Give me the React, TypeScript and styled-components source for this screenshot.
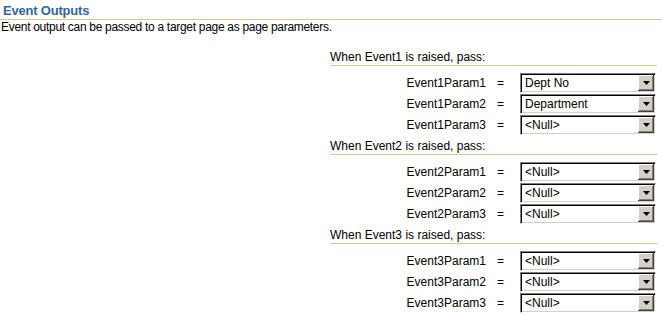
import React from 'react';
import styled, { createGlobalStyle } from 'styled-components';

const GlobalStyle = createGlobalStyle`
    body {
        margin: 0;
        background: #ffffff;
        font-family: "Liberation Sans", Arial, sans-serif;
        font-size: 12px;
        color: #000000;
    }
`;

const Page = styled.div`
    width: 662px;
`;

const Title = styled.div`
    padding: 3px 0 0 3px;
    font-size: 13px;
    font-weight: bold;
    line-height: 16px;
    letter-spacing: -0.2px;
    color: #336699;
    border-bottom: 1px solid #cccc99;
`;

const Description = styled.div`
    padding-left: 1px;
    line-height: 15px;
    letter-spacing: -0.3px;
`;

const Sections = styled.div`
    padding: 11px 5px 0 330px;
`;

const Section = styled.div`
    margin-top: 4px;
`;

const SectionTitle = styled.div`
    line-height: 15px;
    border-bottom: 1px solid #cccc99;
`;

const Rows = styled.div`
    display: flex;
    flex-direction: column;
    gap: 1px;
    margin-top: 7px;
`;

const Row = styled.div`
    display: flex;
    align-items: center;
    justify-content: flex-end;
    height: 20px;
    padding-right: 1px;
`;

const Label = styled.span`
    text-align: right;
`;

const Equals = styled.span`
    margin: 0 16px 0 11px;
`;

const SelectBox = styled.div`
    box-sizing: border-box;
    width: 136px;
    height: 20px;
    display: flex;
    align-items: center;
    background: #ffffff;
    border: 1px solid;
    border-color: #808080 #ffffff #ffffff #808080;
    box-shadow: inset 1px 1px 0 #000000, inset -1px -1px 0 #d4d0c8;
    padding: 1px;
`;

const SelectValue = styled.span`
    flex: 1;
    padding-left: 3px;
    white-space: nowrap;
    overflow: hidden;
`;

const DropButton = styled.span`
    box-sizing: border-box;
    width: 16px;
    height: 16px;
    display: flex;
    align-items: center;
    justify-content: center;
    background: #d4d0c8;
    box-shadow: inset -1px -1px 0 #404040, inset 1px 1px 0 #ffffff,
        inset -2px -2px 0 #808080;
`;

type Param = { name: string; value: string };

type EventDef = { event: string; params: Param[] };

const events: EventDef[] = [
    {
        event: 'Event1',
        params: [
            { name: 'Event1Param1', value: 'Dept No' },
            { name: 'Event1Param2', value: 'Department' },
            { name: 'Event1Param3', value: '<Null>' },
        ],
    },
    {
        event: 'Event2',
        params: [
            { name: 'Event2Param1', value: '<Null>' },
            { name: 'Event2Param2', value: '<Null>' },
            { name: 'Event2Param3', value: '<Null>' },
        ],
    },
    {
        event: 'Event3',
        params: [
            { name: 'Event3Param1', value: '<Null>' },
            { name: 'Event3Param2', value: '<Null>' },
            { name: 'Event3Param3', value: '<Null>' },
        ],
    },
];

const Select: React.FC<{ value: string }> = ({ value }) => (
    <SelectBox>
        <SelectValue>{value}</SelectValue>
        <DropButton>
            <svg width="7" height="4" viewBox="0 0 7 4">
                <polygon points="0,0 7,0 3.5,4" fill="#000000" />
            </svg>
        </DropButton>
    </SelectBox>
);

const App: React.FC = () => {
    return (
        <Page>
            <GlobalStyle />
            <Title>Event Outputs</Title>
            <Description>Event output can be passed to a target page as page parameters.</Description>
            <Sections>
                {events.map((ev) => (
                    <Section key={ev.event}>
                        <SectionTitle>When {ev.event} is raised, pass:</SectionTitle>
                        <Rows>
                            {ev.params.map((p) => (
                                <Row key={p.name}>
                                    <Label>{p.name}</Label>
                                    <Equals>=</Equals>
                                    <Select value={p.value} />
                                </Row>
                            ))}
                        </Rows>
                    </Section>
                ))}
            </Sections>
        </Page>
    );
};

export default App;
